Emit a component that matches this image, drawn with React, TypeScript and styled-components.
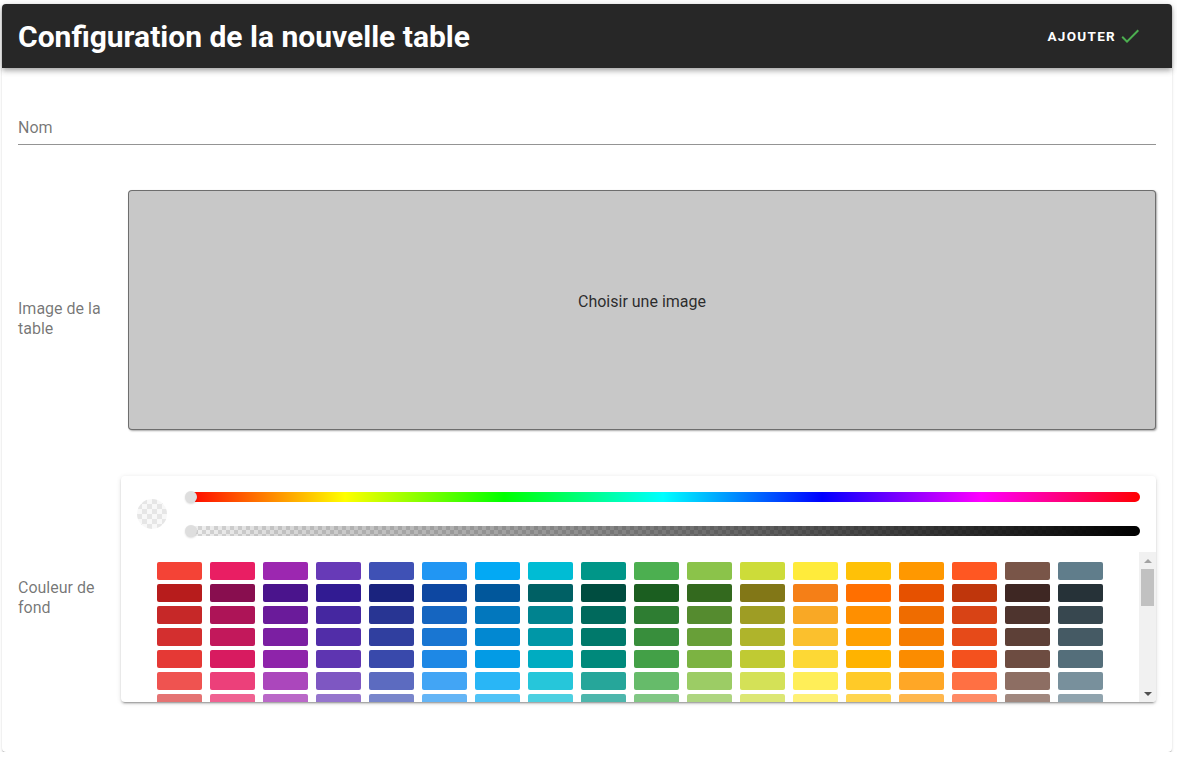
import React from "react";
import styled, { createGlobalStyle } from "styled-components";

const GlobalStyle = createGlobalStyle`
  html, body { margin: 0; padding: 0; background: #ffffff; }
  body { font-family: Roboto, "Noto Sans", Arial, sans-serif; }
  * { box-sizing: border-box; }
`;

const Page = styled.div`
  padding: 4px 5px 0 2px;
`;

const Card = styled.div`
  width: 1170px;
  background: #fff;
  border-radius: 4px;
  box-shadow: 0 2px 1px -1px rgba(0, 0, 0, 0.2), 0 1px 1px 0 rgba(0, 0, 0, 0.14),
    0 1px 3px 0 rgba(0, 0, 0, 0.12);
`;

const Header = styled.header`
  height: 64px;
  background: #272727;
  border-radius: 4px 4px 0 0;
  display: flex;
  align-items: center;
  justify-content: space-between;
  padding: 0 30px 0 16px;
  box-shadow: 0 2px 4px -1px rgba(0, 0, 0, 0.2), 0 4px 5px 0 rgba(0, 0, 0, 0.14),
    0 1px 10px 0 rgba(0, 0, 0, 0.12);
  position: relative;
`;

const Title = styled.h1`
  margin: 0;
  font-family: Roboto, Arial, sans-serif;
  font-weight: 700;
  font-size: 30px;
  color: #ffffff;
  letter-spacing: 0;
`;

const AddButton = styled.button`
  display: flex;
  align-items: center;
  gap: 2px;
  background: transparent;
  border: none;
  padding: 0;
  height: 36px;
  font-family: Roboto, Arial, sans-serif;
  font-weight: 700;
  font-size: 13.5px;
  letter-spacing: 1.3px;
  text-transform: uppercase;
  color: #ffffff;
  cursor: pointer;
`;

const Content = styled.div`
  padding: 0 16px 32px 16px;
`;

const Field = styled.div`
  padding-top: 48px;
  border-bottom: 1px solid rgba(0, 0, 0, 0.42);
  padding-bottom: 4px;
`;

const FieldLabel = styled.label`
  display: block;
  font-size: 16px;
  line-height: 24px;
  color: rgba(0, 0, 0, 0.55);
`;

const Row = styled.div<{ $top: number }>`
  margin-top: ${(p) => p.$top}px;
  display: flex;
  align-items: center;
`;

const RowLabel = styled.div`
  width: 103px;
  flex: none;
  font-size: 16px;
  line-height: 20px;
  color: rgba(0, 0, 0, 0.55);
  padding-right: 8px;
`;

const RowBody = styled.div<{ $indent?: number }>`
  flex: 1;
  padding-bottom: 18px;
  padding-left: ${(p) => p.$indent ?? 0}px;
`;

const ImageBox = styled.div`
  height: 240px;
  background: #c8c8c8;
  border: 1px solid rgba(0, 0, 0, 0.45);
  border-radius: 4px;
  box-shadow: 1px 1px 2px rgba(0, 0, 0, 0.35);
  display: flex;
  align-items: center;
  justify-content: center;
  padding-bottom: 18px;
  font-size: 16px;
  color: rgba(0, 0, 0, 0.8);
  cursor: pointer;
`;

const Picker = styled.div`
  background: #fff;
  border-radius: 4px;
  overflow: hidden;
  box-shadow: 0 3px 1px -2px rgba(0, 0, 0, 0.2), 0 2px 2px 0 rgba(0, 0, 0, 0.14),
    0 1px 5px 0 rgba(0, 0, 0, 0.12);
`;

const Controls = styled.div`
  display: flex;
  align-items: center;
  padding: 15px 16px 15px 16px;
  gap: 18px;
`;

const Dot = styled.div`
  width: 30px;
  height: 30px;
  flex: none;
  border-radius: 50%;
  background: conic-gradient(#e6e6e6 25%, #f8f8f8 0 50%, #e6e6e6 0 75%, #f8f8f8 0);
  background-size: 10px 10px;
`;

const Sliders = styled.div`
  flex: 1;
  display: flex;
  flex-direction: column;
  gap: 22px;
`;

const Slider = styled.div`
  position: relative;
  height: 12px;
  padding: 1px 0;
`;

const HueTrack = styled.div`
  height: 10px;
  border-radius: 5px;
  margin-left: 1px;
  background: linear-gradient(
    to right,
    #f00 0%,
    #ff0 16.66%,
    #0f0 33.33%,
    #0ff 50%,
    #00f 66.66%,
    #f0f 83.33%,
    #f00 100%
  );
`;

const AlphaTrack = styled.div`
  height: 10px;
  border-radius: 5px;
  margin-left: 1px;
  background: linear-gradient(to right, rgba(0, 0, 0, 0), #000),
    conic-gradient(#d6d6d6 25%, #f2f2f2 0 50%, #d6d6d6 0 75%, #f2f2f2 0);
  background-size: 100% 100%, 8px 8px;
`;

const Thumb = styled.div`
  position: absolute;
  left: 0;
  top: 0;
  width: 12px;
  height: 12px;
  border-radius: 50%;
  background: #dedede;
  box-shadow: 0 1px 2px rgba(0, 0, 0, 0.15);
`;

const SwatchArea = styled.div`
  display: flex;
  height: 150px;
`;

const SwatchScroll = styled.div`
  flex: 1;
  overflow: hidden;
  display: flex;
  justify-content: center;
  gap: 8px;
  padding-top: 10px;
`;

const SwatchColumn = styled.div`
  display: flex;
  flex-direction: column;
  gap: 4px;
`;

const Swatch = styled.div<{ $c: string }>`
  width: 45px;
  height: 18px;
  flex: none;
  border-radius: 2px;
  background: ${(p) => p.$c};
  cursor: pointer;
`;

const Scrollbar = styled.div`
  width: 17px;
  flex: none;
  background: #f1f1f1;
  display: flex;
  flex-direction: column;
`;

const ScrollButton = styled.div`
  height: 17px;
  display: flex;
  align-items: center;
  justify-content: center;
`;

const ScrollTrack = styled.div`
  flex: 1;
  padding: 0 2px;
`;

const ScrollThumb = styled.div`
  height: 37px;
  background: #c1c1c1;
`;

const Arrow = styled.div<{ $up?: boolean }>`
  width: 0;
  height: 0;
  border-left: 4px solid transparent;
  border-right: 4px solid transparent;
  ${(p) =>
    p.$up
      ? "border-bottom: 4px solid #a3a3a3;"
      : "border-top: 4px solid #505050;"}
`;

const palette: string[][] = [
  ["#F44336", "#B71C1C", "#C62828", "#D32F2F", "#E53935", "#EF5350", "#E57373", "#EF9A9A"],
  ["#E91E63", "#880E4F", "#AD1457", "#C2185B", "#D81B60", "#EC407A", "#F06292", "#F48FB1"],
  ["#9C27B0", "#4A148C", "#6A1B9A", "#7B1FA2", "#8E24AA", "#AB47BC", "#BA68C8", "#CE93D8"],
  ["#673AB7", "#311B92", "#4527A0", "#512DA8", "#5E35B1", "#7E57C2", "#9575CD", "#B39DDB"],
  ["#3F51B5", "#1A237E", "#283593", "#303F9F", "#3949AB", "#5C6BC0", "#7986CB", "#9FA8DA"],
  ["#2196F3", "#0D47A1", "#1565C0", "#1976D2", "#1E88E5", "#42A5F5", "#64B5F6", "#90CAF9"],
  ["#03A9F4", "#01579B", "#0277BD", "#0288D1", "#039BE5", "#29B6F6", "#4FC3F7", "#81D4FA"],
  ["#00BCD4", "#006064", "#00838F", "#0097A7", "#00ACC1", "#26C6DA", "#4DD0E1", "#80DEEA"],
  ["#009688", "#004D40", "#00695C", "#00796B", "#00897B", "#26A69A", "#4DB6AC", "#80CBC4"],
  ["#4CAF50", "#1B5E20", "#2E7D32", "#388E3C", "#43A047", "#66BB6A", "#81C784", "#A5D6A7"],
  ["#8BC34A", "#33691E", "#558B2F", "#689F38", "#7CB342", "#9CCC65", "#AED581", "#C5E1A5"],
  ["#CDDC39", "#827717", "#9E9D24", "#AFB42B", "#C0CA33", "#D4E157", "#DCE775", "#E6EE9C"],
  ["#FFEB3B", "#F57F17", "#F9A825", "#FBC02D", "#FDD835", "#FFEE58", "#FFF176", "#FFF59D"],
  ["#FFC107", "#FF6F00", "#FF8F00", "#FFA000", "#FFB300", "#FFCA28", "#FFD54F", "#FFE082"],
  ["#FF9800", "#E65100", "#EF6C00", "#F57C00", "#FB8C00", "#FFA726", "#FFB74D", "#FFCC80"],
  ["#FF5722", "#BF360C", "#D84315", "#E64A19", "#F4511E", "#FF7043", "#FF8A65", "#FFAB91"],
  ["#795548", "#3E2723", "#4E342E", "#5D4037", "#6D4C41", "#8D6E63", "#A1887F", "#BCAAA4"],
  ["#607D8B", "#263238", "#37474F", "#455A64", "#546E7A", "#78909C", "#90A4AE", "#B0BEC5"],
];

const CheckIcon = () => (
  <svg width="24" height="24" viewBox="0 0 24 24" aria-hidden="true">
    <path
      fill="#4CAF50"
      d="M21,7L9,19L3.5,13.5L4.91,12.09L9,16.17L19.59,5.59L21,7Z"
    />
  </svg>
);

export default function App() {
  return (
    <>
      <GlobalStyle />
      <Page>
        <Card>
          <Header>
            <Title>Configuration de la nouvelle table</Title>
            <AddButton>
              Ajouter
              <CheckIcon />
            </AddButton>
          </Header>
          <Content>
            <Field>
              <FieldLabel>Nom</FieldLabel>
            </Field>
            <Row $top={45}>
              <RowLabel>Image de la table</RowLabel>
              <RowBody $indent={7}>
                <ImageBox>Choisir une image</ImageBox>
              </RowBody>
            </Row>
            <Row $top={28}>
              <RowLabel>Couleur de fond</RowLabel>
              <RowBody>
                <Picker>
                  <Controls>
                    <Dot />
                    <Sliders>
                      <Slider>
                        <HueTrack />
                        <Thumb />
                      </Slider>
                      <Slider>
                        <AlphaTrack />
                        <Thumb />
                      </Slider>
                    </Sliders>
                  </Controls>
                  <SwatchArea>
                    <SwatchScroll>
                      {palette.map((col, i) => (
                        <SwatchColumn key={i}>
                          {col.map((c, j) => (
                            <Swatch key={j} $c={c} />
                          ))}
                        </SwatchColumn>
                      ))}
                    </SwatchScroll>
                    <Scrollbar>
                      <ScrollButton>
                        <Arrow $up />
                      </ScrollButton>
                      <ScrollTrack>
                        <ScrollThumb />
                      </ScrollTrack>
                      <ScrollButton>
                        <Arrow />
                      </ScrollButton>
                    </Scrollbar>
                  </SwatchArea>
                </Picker>
              </RowBody>
            </Row>
          </Content>
        </Card>
      </Page>
    </>
  );
}
